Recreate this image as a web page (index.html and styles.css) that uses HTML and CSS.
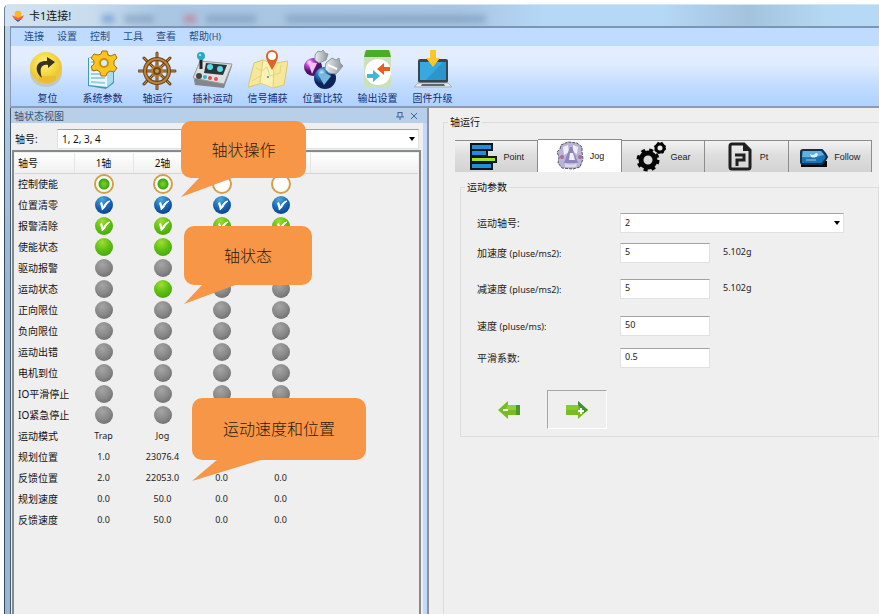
FILE: index.html
```html
<!DOCTYPE html>
<html lang="zh-CN">
<head>
<meta charset="utf-8">
<title>卡1连接!</title>
<link rel="stylesheet" href="styles.css">
</head>
<body>
<div class="window">
  <header class="titlebar">
    <svg class="app-icon" viewBox="0 0 14 14" aria-hidden="true">
      <circle cx="7" cy="5" r="4" fill="#fdb52a"/><path d="M0 6l7 3 7-3-2 4-5 3-5-3z" fill="#ef6a35"/><path d="M2 10l5 2 5-2-5 4z" fill="#4156a8"/>
    </svg>
    <h1>卡1连接!</h1>
    <div class="glass" aria-hidden="true"><i></i><i></i><i></i><i></i><i></i></div>
  </header>
  <div class="frame">
    <nav class="menu">
      <button>连接</button><button>设置</button><button>控制</button><button>工具</button><button>查看</button><button>帮助<small>(H)</small></button>
    </nav>
    <div class="toolbar">
      <button class="tool">
        <svg viewBox="0 0 40 40"><defs><radialGradient id="gold" cx=".45" cy=".35"><stop offset="0" stop-color="#fff08c"/><stop offset=".7" stop-color="#f4d83f"/><stop offset="1" stop-color="#ecc63c"/></radialGradient></defs><ellipse cx="18" cy="23" rx="16" ry="14" fill="#b8b4a0" opacity=".5"/><circle cx="18" cy="18" r="16" fill="url(#gold)"/><path d="M11 26h17v4q-8 6-17 0z" fill="#e9b824" opacity=".6"/><path d="M14 28C5 20 8 10 19 11V7l8 5-7 6v-3c-7-1-9 4-6 13z" fill="#39321f"/></svg>
        <span>复位</span>
      </button>
      <button class="tool">
        <svg viewBox="0 0 40 40"><path d="M5 8 23 3l8 5v25l-8 6L5 36z" fill="#3d9bc0"/><path d="M6 8 22 4l2 4v29L6 35z" fill="#eaf8fd"/><path d="M24 8l6 2v22l-6 5z" fill="#a9dcee"/><path d="M8 20h11M8 24h14M8 28h14M8 32l14 1M8 12h5M8 16h4" stroke="#9ccfe4" stroke-width="2"/><g transform="translate(21 13)"><path d="M-2-12h5l1 4 3 1 4-2 2 4-3 3v4l3 3-3 4-4-1-3 2-1 3h-5l-1-4-3-2-4 1-2-4 3-3v-3l-3-3 3-4 4 1 3-1z" fill="#f9c51d" stroke="#a9700f"/><circle r="4" fill="#d8f0f5" stroke="#c98f17" stroke-width="2"/></g></svg>
        <span>系统参数</span>
      </button>
      <button class="tool">
        <svg viewBox="0 0 40 40"><g transform="translate(19 21)" fill="none" stroke-linecap="round"><path d="M0-18V18M-18 0H18M-13-13 13 13M13-13-13 13" stroke="#6d4518" stroke-width="3"/><path d="M0-18V18M-18 0H18M-13-13 13 13M13-13-13 13" stroke="#c9944d"/><circle r="12" stroke="#6d4518" stroke-width="4"/><circle r="12" stroke="#bd843c" stroke-width="2"/><circle r="5" fill="#6f4a1d" stroke="#b47b35" stroke-width="2"/><circle r="2" fill="#c79850"/></g></svg>
        <span>轴运行</span>
      </button>
      <button class="tool">
        <svg viewBox="0 0 40 40"><path d="M1 30 7 14l32 2-8 22-29-3z" fill="#83878b"/><path d="M0 28 7 11l32 3-8 20z" fill="#dddfe1" stroke="#999"/><path d="M13 13l21 2-4 10-19-2z" fill="#29363c"/><circle cx="17" cy="17" r="3" fill="#58dce8"/><circle cx="27" cy="19" r="3" fill="#58dce8"/><circle cx="6" cy="26" r="3" fill="#444"/><path d="M8 19 8 8" stroke="#222" stroke-width="3"/><circle cx="8" cy="6" r="4" fill="#28aac2"/><circle cx="7" cy="5" r="1" fill="#c4f4fa"/><circle cx="12" cy="27" r="2" fill="#28b6cb"/><circle cx="17" cy="28" r="2" fill="#e64845"/><circle cx="23" cy="29" r="2" fill="#f34c58"/></svg>
        <span>插补运动</span>
      </button>
      <button class="tool">
        <svg viewBox="0 0 40 40"><path d="M6 13 15 10l8 4 17-3-4 24-11 3-10-5-15 4z" fill="#f5e899" stroke="#d9c674"/><path d="M15 10l-3 23 13 5 1-24z" fill="#fbf2b4" stroke="#e0cf80"/><path d="M8 18l6 3 5-4 3 9 10-3 1-8M4 31l10-6" stroke="#e6d384" fill="none"/><circle cx="20" cy="27" r="1" fill="#387ec1"/><path d="M24 20C19 11 18 9 18 6a6 6 0 0 1 12 0c0 3-2 7-6 14z" fill="#dd6425"/><circle cx="24" cy="6" r="4" fill="#fff"/></svg>
        <span>信号捕获</span>
      </button>
      <button class="tool">
        <svg viewBox="0 0 40 40"><defs><radialGradient id="purple" cx=".3" cy=".25"><stop stop-color="#fff"/><stop offset=".4" stop-color="#c04bd5"/><stop offset="1" stop-color="#4b1268"/></radialGradient><radialGradient id="blue" cx=".35" cy=".25"><stop stop-color="#c8f5ff"/><stop offset=".45" stop-color="#2b75bd"/><stop offset="1" stop-color="#0b235a"/></radialGradient><linearGradient id="steel"><stop stop-color="#eee"/><stop offset="1" stop-color="#8a959c"/></linearGradient></defs><circle cx="10" cy="17" r="9" fill="url(#purple)"/><path d="M5 12l9 1-5 11z" fill="#f3bdf0"/><path d="M12 5l3-4 3 1 2-2 2 3 3 1-2 6-7 3-4-3z" fill="url(#steel)" stroke="#8d9aa2"/><circle cx="22" cy="28" r="11" fill="url(#blue)"/><path d="M15 24l7-1 6 3-7 9z" fill="#77b9de"/><path d="M23 13 29 8l4 2 3-2 1 5 3 3-7 8-7-1-4-4z" fill="url(#steel)" stroke="#8b98a1"/><path d="M25 15l9 4" stroke="#fff" stroke-width="2"/></svg>
        <span>位置比较</span>
      </button>
      <button class="tool">
        <svg viewBox="0 0 40 40"><rect x="6" y="1" width="27" height="37" rx="2" fill="#c9e2bd"/><path d="M8 0h23l2 7H6z" fill="#4cac28"/><circle cx="20" cy="22" r="13" fill="#fff"/><path d="M19 19l7-6v4h6v4h-6v4z" fill="#ec5b22"/><path d="M22 26l-7-6v4H9v4h6v4z" fill="#43b5d5"/></svg>
        <span>输出设置</span>
      </button>
      <button class="tool">
        <svg viewBox="0 0 40 40"><rect x="5" y="9" width="30" height="24" rx="2" fill="#37464f"/><path d="M7 12h26v18H7z" fill="#37a9df"/><path d="M13 30 30 12h3v18z" fill="#2b95cd"/><path d="M5 33h30l4 4H1z" fill="#e6e9eb" stroke="#a7b0b7"/><path d="M9 34h22l1 2H8z" fill="#5b6770"/><path d="M17 0h6v8h4l-7 9-7-9h4z" fill="#fac629"/></svg>
        <span>固件升级</span>
      </button>
    </div>
    <div class="workspace">
      <aside class="dock">
        <div class="dock-title"><h2>轴状态视图</h2>
          <button aria-label="固定"><svg viewBox="0 0 8 8"><path d="M2 0v5M6 0v5M2 .5h4M0 5h8M4 5v3" fill="none" stroke="#3f6796"/></svg></button>
          <button aria-label="关闭"><svg viewBox="0 0 8 8"><path d="M1 1l6 6M7 1 1 7" fill="none" stroke="#3f6796"/></svg></button>
        </div>
        <div class="axis-picker"><label for="axes">轴号:</label><div class="select"><select id="axes"><option>1, 2, 3, 4</option></select></div></div>
        <div class="status">
          <table>
            <thead><tr><th scope="col">轴号</th><th scope="col">1轴</th><th scope="col">2轴</th><th></th><th></th><th class="rest"></th></tr></thead>
            <tbody id="rows"></tbody>
          </table>
        </div>
        <div class="callout operations"><svg viewBox="0 0 54 20"><path d="M19 0 0 20 54 0z"/></svg>轴状操作</div>
        <div class="callout states"><svg viewBox="0 0 54 20"><path d="M19 0 0 20 54 0z"/></svg>轴状态</div>
        <div class="callout motion"><svg viewBox="0 0 72 22"><path d="M26 0 0 22 72 0z"/></svg>运动速度和位置</div>
      </aside>
      <main class="run">
        <fieldset class="run-group">
          <legend>轴运行</legend>
          <div class="tabs" role="tablist">
            <button role="tab"><svg viewBox="0 0 30 30"><g fill="#208edb" stroke="#08151d" stroke-width="2"><path d="M3 2h21v6H3zM3 8h16v6H3zM3 21h21v6H3z"/></g><path d="M3 15h25v5H3z" fill="#a4e02b" stroke="#101a10" stroke-width="2"/></svg>Point</button>
            <button role="tab" class="active" aria-selected="true"><svg viewBox="0 0 30 30"><path d="M6 4 13 1l9 1 5 4v5l1 7-3 8-7 2-11-1-4-5 1-6-2-5 3-3z" fill="#b9b4d4" stroke="#55506e" stroke-dasharray="3 1"/><path d="M8 6l5-2 1 7-5 3zM18 4l5 2-1 7-4-2z" fill="#f0eef8"/><path d="M15 6l-6 16h14L17 6z" fill="#8d86bb"/><path d="M15 12h3l2 7h-6z" fill="#f0eef8"/><circle cx="7" cy="16" r="2" fill="#a66e96"/><circle cx="25" cy="16" r="2" fill="#a66e96"/><path d="M10 22q6 3 12 0l-1 4H10z" fill="#dcd8ea"/></svg>Jog</button>
            <button role="tab"><svg viewBox="0 0 30 30"><g fill="none" stroke="#060606"><circle cx="12" cy="18" r="7" stroke-width="5"/><circle cx="12" cy="18" r="10" stroke-width="3" stroke-dasharray="4 4"/><circle cx="24" cy="6" r="4" stroke-width="3"/><circle cx="24" cy="6" r="5" stroke-width="2" stroke-dasharray="2 2"/></g></svg>Gear</button>
            <button role="tab"><svg viewBox="0 0 30 30"><path d="M7 2h12l6 6v17q0 2-2 2H7q-2 0-2-2V4q0-2 2-2z" fill="none" stroke="#1f1f1f" stroke-width="3"/><path d="M18 2v7h7z" fill="#1f1f1f"/><path d="M10 13h9v5h-7v6" stroke="#1f1f1f" stroke-width="3" fill="none"/></svg>Pt</button>
            <button role="tab"><svg viewBox="0 0 30 30"><path d="M2 19h26v6H2z" fill="#060606"/><path d="M4 8h19q3 3 5 7-2 4-5 7H4q-2 0-2-2V10q0-2 2-2z" fill="#1a72b5" stroke="#123149" stroke-width="2"/><path d="M4 9h18l3 4q-10 3-22 2z" fill="#61afdf"/><path d="M11 12q3 2 5 0 1-2 3 0-1 5-7 3z" fill="#d8f3ff"/><path d="M7 18h10" stroke="#9cc9e4"/></svg>Follow</button>
          </div>
          <fieldset class="params">
            <legend>运动参数</legend>
            <div class="form">
              <label for="axis">运动轴号:</label><div class="select"><select id="axis"><option>2</option></select></div>
              <label for="acc">加速度 <small>(pluse/ms2):</small></label><input id="acc" value="5"><output>5.102g</output>
              <label for="dec">减速度 <small>(pluse/ms2):</small></label><input id="dec" value="5"><output>5.102g</output>
              <label for="speed">速度 <small>(pluse/ms):</small></label><input id="speed" value="50">
              <label for="smooth">平滑系数:</label><input id="smooth" value="0.5">
            </div>
            <div class="jog">
              <button aria-label="负向"><svg viewBox="0 0 26 26"><path d="M2 13 12 4v4h12v10H12v4z" fill="#76bd22"/><path d="M12 8h12v5H9z" fill="#8fd03c"/><path d="M20 8h4v10h-4z" fill="#4b9b22"/><path d="M7 13h5" stroke="#fff" stroke-width="2"/></svg></button>
              <button class="pressed" aria-label="正向"><svg viewBox="0 0 26 26"><path d="M24 13 14 4v4H2v10h12v4z" fill="#76bd22"/><path d="M2 8h12v5H2z" fill="#86cc2e"/><path d="M14 4l10 9-4 3-6-8z" fill="#438f35"/><path d="M14 14h6M17 11v6" stroke="#fff" stroke-width="2"/></svg></button>
            </div>
          </fieldset>
        </fieldset>
      </main>
    </div>
  </div>
</div>
<svg width="0" height="0" class="defs" aria-hidden="true"><symbol id="tick" viewBox="0 0 18 18"><path d="M5 7 7 6 9 12 7 14z" fill="#fff"/><path d="M7 14q3-2 4-5 2-3 4-4-2 0-4 2-2 2-3 5z" fill="#fff" stroke="#fff"/></symbol></svg>
<script src="app.js"></script>
</body>
</html>
```
FILE: app.js
```js
const tick = '<svg><use href="#tick"/></svg>';
const button = (kind, label, inner = '') =>
  `<button class="lamp ${kind}" aria-label="${label}">${inner}</button>`;
const lamp = kind => `<span class="lamp ${kind}"></span>`;

const rows = [
  ['控制使能', ...['ring on', 'ring on', 'ring', 'ring'].map(k => button(k, '控制使能'))],
  ['位置清零', ...Array(4).fill(button('blue', '位置清零', tick))],
  ['报警清除', ...Array(4).fill(button('green', '报警清除', tick))],
  ['使能状态', lamp('green'), lamp('green'), lamp('gray'), lamp('gray')],
  ['驱动报警', ...Array(4).fill(lamp('gray'))],
  ['运动状态', lamp('gray'), lamp('green'), lamp('gray'), lamp('gray')],
  ...['正向限位', '负向限位', '运动出错', '电机到位', 'IO平滑停止', 'IO紧急停止']
    .map(name => [name, ...Array(4).fill(lamp('gray'))]),
  ['运动模式', 'Trap', 'Jog', '', ''],
  ['规划位置', '1.0', '23076.4', '0.0', '0.0'],
  ['反馈位置', '2.0', '22053.0', '0.0', '0.0'],
  ['规划速度', '0.0', '50.0', '0.0', '0.0'],
  ['反馈速度', '0.0', '50.0', '0.0', '0.0'],
];

document.getElementById('rows').innerHTML = rows
  .map(([name, ...cells]) =>
    `<tr><th scope="row">${name}</th>${cells.map(c => `<td>${c}</td>`).join('')}<td></td></tr>`)
  .join('');
```
FILE: styles.css
```css
* { box-sizing: border-box; }
body {
  margin: 0;
  background: #fff;
  color: #222;
  font: 10px/14px "Noto Sans", "Noto Sans CJK SC", sans-serif;
}
h1, h2 { margin: 0; font: inherit; }
small { font-size: 9px; }
button, select, input { font: inherit; color: inherit; }
button { padding: 0; border: 0; background: none; }
svg { display: block; }
.defs { position: absolute; }

.window {
  display: flex;
  flex-direction: column;
  min-height: 100vh;
  border: solid #fff;
  border-width: 4px 0 0 4px;
}
.titlebar {
  display: flex;
  align-items: center;
  gap: 5px;
  height: 22px;
  padding-left: 7px;
  border: 1px solid #6c8298;
  border-width: 1px 0 0 1px;
  border-top-color: #d3e4f2;
  border-radius: 5px 0 0 0;
  background: linear-gradient(90deg, #d3e2f0 0, #c8dcee 10%, #a9c6e2 18%, #a8c5e1 52%, #b5d8f6 62%, #b5d8f6 75%, #a3c3dd 85%, #b5d8f3 94%, #b6daf5);
}
.app-icon { width: 12px; height: 14px; }
h1 { font-size: 11px; color: #111; white-space: nowrap; }
.glass { display: flex; align-items: center; gap: 10px; flex: 1; padding: 7px 0 0 26px; filter: blur(3px); }
.glass i { width: 30px; height: 8px; background: #7796b8; opacity: .6; }
.glass i:nth-child(1) { width: 12px; background: #5684c4; }
.glass i:nth-child(3) { width: 12px; margin-left: 20px; background: #c46a86; }
.glass i:nth-child(4) { width: 50px; }
.glass i:nth-child(5) { width: 200px; margin-left: 20px; }

.frame {
  display: flex;
  flex-direction: column;
  flex: 1;
  border: solid #34495c;
  border-width: 0 0 0 1px;
  padding-left: 5px;
  background: linear-gradient(#bdd3e9, #9ab4d2 260px, #9db5d3);
}
.menu {
  display: flex;
  gap: 13px;
  height: 20px;
  padding: 0 13px;
  border: solid #7d94b2;
  border-width: 2px 0 0 1px;
  background: #bfdbff;
  color: #254f86;
}
.menu button { padding-bottom: 2px; }
.toolbar {
  display: flex;
  height: 62px;
  padding: 4px 9px 0;
  border: solid #8a9bb3;
  border-width: 0 0 2px 1px;
  background: linear-gradient(#e4edfc, #e0ecff 30%, #c2dcff 66%, #afd2ff);
  color: #152c73;
}
.tool { display: flex; flex-direction: column; align-items: center; gap: 1px; width: 55px; }
.tool svg { width: 40px; height: 40px; }
.tool span { white-space: nowrap; }

.workspace { display: flex; flex: 1; border-left: 1px solid #47596d; background: #efefef; }
.dock {
  position: relative;
  display: flex;
  flex-direction: column;
  flex: 0 0 418px;
  border-right: 2px solid #8e9296;
  background: linear-gradient(90deg, #efefef 412px, #c0d9fd 412px);
}
.dock-title {
  display: flex;
  align-items: center;
  gap: 4px;
  height: 15px;
  padding: 0 8px 0 3px;
  background: #b8cfe9;
  color: #34547b;
}
.dock-title h2 { flex: 1; }
.dock-title button { width: 10px; height: 10px; padding: 1px; }
.axis-picker { display: flex; align-items: center; height: 27px; padding: 6px 8px 1px 4px; color: #111; }
.axis-picker label { width: 42px; }
.select { position: relative; flex: 1; }
.select::after {
  content: "";
  position: absolute;
  top: 8px;
  right: 4px;
  border: solid transparent;
  border-width: 4px 3px 0;
  border-top-color: #000;
  pointer-events: none;
}
select, input {
  display: block;
  width: 100%;
  height: 20px;
  margin: 0;
  padding: 0 4px;
  border: 1px solid #e1e1e1;
  border-top-color: #a2a2a2;
  border-radius: 0;
  appearance: none;
  background: #fff;
}
.status {
  flex: 1;
  margin: 0 6px 0 1px;
  padding: 1px 1px 0;
  border: 2px solid #858a8d;
  border-width: 2px 2px 0;
}
table { width: 100%; border-collapse: collapse; table-layout: fixed; color: #111; }
thead tr { height: 20px; background: linear-gradient(#fff, #f0f0f0); }
thead th { width: 59px; border-bottom: 1px solid #d4d4d4; border-right: 1px solid #e6e6e6; }
thead th.rest { width: auto; border-right: 0; }
tbody tr { height: 21px; }
th, td { padding: 0; font-weight: 400; text-align: center; white-space: nowrap; }
th:first-child { text-align: left; padding-left: 3px; }
td { font-size: 9px; color: #222; }
.lamp { display: block; width: 18px; height: 18px; margin: 0 auto; border-radius: 50%; }
.lamp svg { width: 18px; height: 18px; }
.gray { background: radial-gradient(circle at 40% 30%, #a5a5a5, #888 50%, #5e5e5e); }
.green { background: radial-gradient(circle at 40% 25%, #a1dc35, #5fc012 45%, #3b9908); }
.blue { background: radial-gradient(circle at 40% 20%, #4da6dc, #1764b3 50%, #092e75); }
.ring { width: 20px; height: 20px; border: 2px solid #d0a04a; background: #fff; }
.ring.on { background: radial-gradient(circle, #80d42d 0, #3ba90e 5px, #fff 6px); }

.callout {
  position: absolute;
  display: flex;
  align-items: center;
  justify-content: center;
  border-radius: 10px;
  background: #f79646;
  color: #2b1a0c;
  font-size: 16px;
  font-weight: 300;
}
.callout svg { position: absolute; top: 100%; left: 0; fill: #f79646; margin-top: -1px; }
.operations { left: 170px; top: 13px; width: 125px; height: 57px; }
.states { left: 173px; top: 118px; width: 128px; height: 59px; }
.operations svg, .states svg { width: 54px; height: 20px; }
.motion { left: 181px; top: 290px; width: 174px; height: 62px; }
.motion svg { width: 72px; height: 22px; }

.run { flex: 1; min-width: 0; padding: 7px 0 0 14px; display: flex; }
fieldset { margin: 0; padding: 0; border: 1px solid #dcdcdc; min-width: 0; }
legend { padding: 0 2px; color: #111; }
.run-group { flex: 1; border-width: 1px 0 0 1px; }
.run-group > legend { margin-left: 4px; }
.tabs { display: flex; margin: 10px 7px 8px 11px; align-items: flex-end; }
.tabs button {
  display: flex;
  align-items: center;
  justify-content: center;
  gap: 5px;
  flex: 1;
  height: 32px;
  border: 1px solid #8c8c8c;
  border-width: 1px 1px 0 0;
  background: linear-gradient(#f3f3f3, #dedede 45%, #d3d3d3);
  font: 9px/14px "Liberation Sans", sans-serif;
}
.tabs button.active { height: 33px; background: #fff; }
.tabs svg { width: 30px; height: 30px; }
.params { margin: 0 0 0 16px; padding-bottom: 7px; }
.params legend { margin-left: 4px; }
.form {
  display: grid;
  grid-template-columns: 143px 90px 1fr;
  grid-template-rows: 30px 36px 37px 32px 20px;
  margin: 19px 34px 22px 16px;
}
.form label { grid-column: 1; line-height: 21px; white-space: nowrap; }
.form .select { grid-column: 2 / 4; }
.form input { padding-bottom: 3px; }
.form input, .form select, output { font-size: 9px; }
output { padding: 2px 0 0 13px; }
.jog { display: flex; gap: 8px; padding-left: 18px; }
.jog button { display: flex; align-items: center; justify-content: center; width: 60px; height: 39px; border: 1px solid transparent; }
.jog svg { width: 26px; height: 26px; }
.jog .pressed { border-color: #a6a6a6 #fff #fff #a6a6a6; }
```
